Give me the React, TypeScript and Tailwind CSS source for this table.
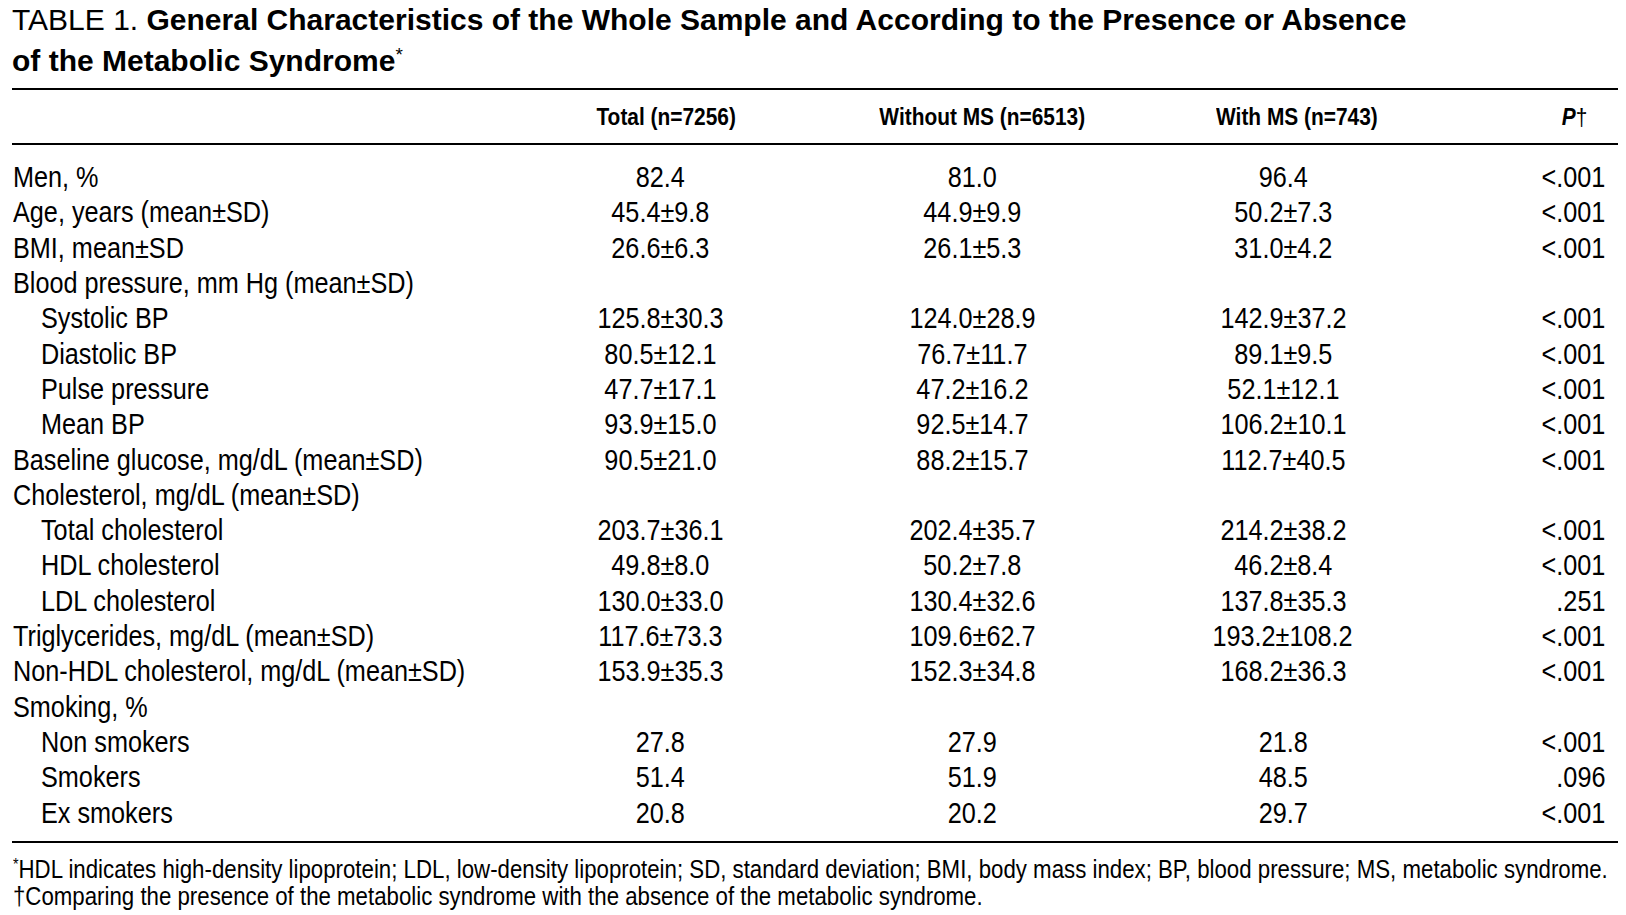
import React from "react";

type Row = { label: string; indent?: boolean; v?: [string, string, string, string] };

const rows: Row[] = [
  { label: "Men, %", v: ["82.4", "81.0", "96.4", "<.001"] },
  { label: "Age, years (mean±SD)", v: ["45.4±9.8", "44.9±9.9", "50.2±7.3", "<.001"] },
  { label: "BMI, mean±SD", v: ["26.6±6.3", "26.1±5.3", "31.0±4.2", "<.001"] },
  { label: "Blood pressure, mm Hg (mean±SD)" },
  { label: "Systolic BP", indent: true, v: ["125.8±30.3", "124.0±28.9", "142.9±37.2", "<.001"] },
  { label: "Diastolic BP", indent: true, v: ["80.5±12.1", "76.7±11.7", "89.1±9.5", "<.001"] },
  { label: "Pulse pressure", indent: true, v: ["47.7±17.1", "47.2±16.2", "52.1±12.1", "<.001"] },
  { label: "Mean BP", indent: true, v: ["93.9±15.0", "92.5±14.7", "106.2±10.1", "<.001"] },
  { label: "Baseline glucose, mg/dL (mean±SD)", v: ["90.5±21.0", "88.2±15.7", "112.7±40.5", "<.001"] },
  { label: "Cholesterol, mg/dL (mean±SD)" },
  { label: "Total cholesterol", indent: true, v: ["203.7±36.1", "202.4±35.7", "214.2±38.2", "<.001"] },
  { label: "HDL cholesterol", indent: true, v: ["49.8±8.0", "50.2±7.8", "46.2±8.4", "<.001"] },
  { label: "LDL cholesterol", indent: true, v: ["130.0±33.0", "130.4±32.6", "137.8±35.3", ".251"] },
  { label: "Triglycerides, mg/dL (mean±SD)", v: ["117.6±73.3", "109.6±62.7", "193.2±108.2", "<.001"] },
  { label: "Non-HDL cholesterol, mg/dL (mean±SD)", v: ["153.9±35.3", "152.3±34.8", "168.2±36.3", "<.001"] },
  { label: "Smoking, %" },
  { label: "Non smokers", indent: true, v: ["27.8", "27.9", "21.8", "<.001"] },
  { label: "Smokers", indent: true, v: ["51.4", "51.9", "48.5", ".096"] },
  { label: "Ex smokers", indent: true, v: ["20.8", "20.2", "29.7", "<.001"] },
];

const grid = "grid grid-cols-[508px_280px_344px_278px_183px]";

function NL({ children }: { children: React.ReactNode }) {
  return <span className="inline-block whitespace-nowrap origin-left scale-x-[0.87]">{children}</span>;
}
function NC({ children }: { children: React.ReactNode }) {
  return <span className="inline-block whitespace-nowrap origin-center scale-x-[0.87]">{children}</span>;
}
function NR({ children }: { children: React.ReactNode }) {
  return <span className="inline-block whitespace-nowrap origin-right scale-x-[0.87]">{children}</span>;
}
function NF({ children }: { children: React.ReactNode }) {
  return <span className="inline-block whitespace-nowrap origin-left scale-x-[0.89]">{children}</span>;
}

export default function App() {
  return (
    <div className="w-[1626px] h-[915px] bg-white text-black overflow-hidden font-['Liberation_Sans',Arial,sans-serif]">
      <div className="pl-[12px] pr-[8px]">
        <div className="pt-[2px] text-[30px] leading-[35px] whitespace-nowrap">
          <div>
            TABLE 1.{" "}
            <span className="font-bold">
              General Characteristics of the Whole Sample and According to the Presence or Absence
            </span>
          </div>
          <div className="font-bold">
            of the Metabolic Syndrome<span className="font-normal text-[19px] align-[10px]">*</span>
          </div>
        </div>

        <div className="mt-[10px] h-[2px] bg-black" />
        <div className={`${grid} pt-[15px] pb-[14px] text-[24px] leading-[24px] font-bold`}>
          <div />
          <div className="text-center pl-[12px]">
            <NC>Total (n=7256)</NC>
          </div>
          <div className="text-center pl-[20px]">
            <NC>Without MS (n=6513)</NC>
          </div>
          <div className="text-center pl-[28px]">
            <NC>With MS (n=743)</NC>
          </div>
          <div className="text-right pr-[18px]">
            <NR>
              <span className="italic">P</span>
              <span className="font-normal">†</span>
            </NR>
          </div>
        </div>
        <div className="h-[2px] bg-black" />

        <div className="pt-[15px] text-[29px]">
          {rows.map((r, i) => (
            <div key={i} className={`${grid} h-[35.32px] leading-[35.32px]`}>
              <div className={r.indent ? "pl-[29px]" : "pl-[1px]"}>
                <NL>{r.label}</NL>
              </div>
              <div className="text-center">{r.v ? <NC>{r.v[0]}</NC> : null}</div>
              <div className="text-center">{r.v ? <NC>{r.v[1]}</NC> : null}</div>
              <div className="text-center">{r.v ? <NC>{r.v[2]}</NC> : null}</div>
              <div className="text-right">{r.v ? <NR>{r.v[3]}</NR> : null}</div>
            </div>
          ))}
        </div>

        <div className="mt-[10px] h-[2px] bg-black" />
        <div className="pt-[8px] pl-[1px] text-[25px] leading-[27px]">
          <div>
            <NF>
              <span className="text-[16px] align-[8px]">*</span>HDL indicates high-density lipoprotein; LDL,
              low-density lipoprotein; SD, standard deviation; BMI, body mass index; BP, blood pressure; MS,
              metabolic syndrome.
            </NF>
          </div>
          <div>
            <NF>†Comparing the presence of the metabolic syndrome with the absence of the metabolic syndrome.</NF>
          </div>
        </div>
      </div>
    </div>
  );
}
